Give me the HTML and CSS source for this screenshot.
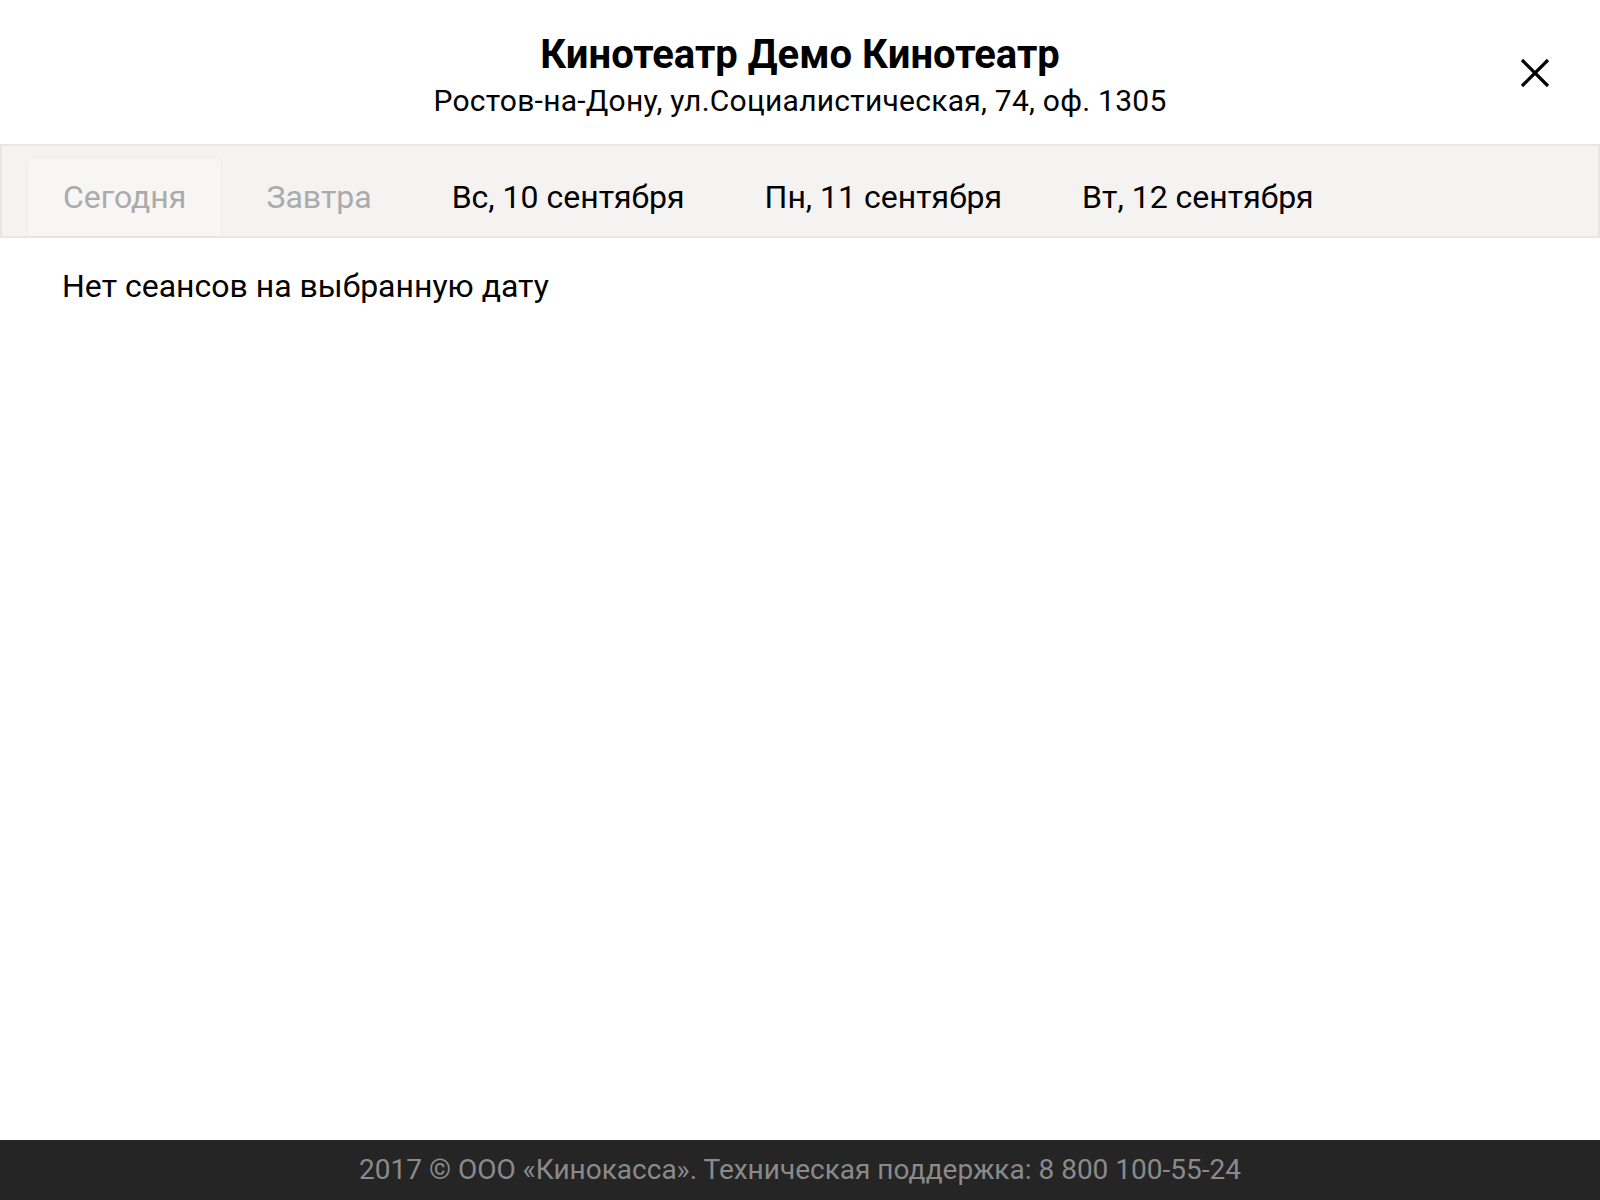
FILE: index.html
```html
<!DOCTYPE html>
<html lang="ru">
<head>
<meta charset="utf-8">
<title>Кинотеатр Демо Кинотеатр</title>
<link rel="stylesheet" href="styles.css">
</head>
<body>
<div class="page">
  <header class="header">
    <h1 class="title">Кинотеатр Демо Кинотеатр</h1>
    <div class="address">Ростов-на-Дону, ул.Социалистическая, 74, оф. 1305</div>
    <button class="close" aria-label="Закрыть">
      <svg width="30" height="30" viewBox="0 0 30 30"><path d="M2 2 L28 28 M28 2 L2 28" stroke="#000" stroke-width="3.2" fill="none"/></svg>
    </button>
  </header>
  <nav class="tabs">
    <div class="tab tab-active tab-muted">Сегодня</div>
    <div class="tab tab-muted">Завтра</div>
    <div class="tab">Вс, 10 сентября</div>
    <div class="tab">Пн, 11 сентября</div>
    <div class="tab">Вт, 12 сентября</div>
  </nav>
  <main class="content">
    <p class="empty">Нет сеансов на выбранную дату</p>
  </main>
  <footer class="footer">2017 © ООО «Кинокасса». Техническая поддержка: 8 800 100-55-24</footer>
</div>
</body>
</html>
```

FILE: styles.css
```css
* { box-sizing: border-box; }
html, body { margin: 0; padding: 0; }
body {
  font-family: Roboto, "Liberation Sans", sans-serif;
  color: #000;
  background: #fff;
}
.page {
  min-height: 100vh;
  display: flex;
  flex-direction: column;
}
.header {
  position: relative;
  height: 144px;
  padding-top: 32px;
  text-align: center;
}
.title {
  margin: 0;
  font-size: 40px;
  font-weight: 700;
  line-height: 46px;
}
.address {
  font-size: 30px;
  line-height: 46px;
  letter-spacing: 0.25px;
}
.close {
  position: absolute;
  top: 58px;
  left: 1520px;
  width: 30px;
  height: 30px;
  padding: 0;
  border: 0;
  background: none;
}
.close svg { display: block; }
.tabs {
  display: flex;
  gap: 8px;
  height: 94px;
  padding: 11px 0 0 25px;
  background: #f4f3f2;
  border: 2px solid #e6e6e6;
}
.tab {
  padding: 0 35px;
  font-size: 32px;
  line-height: 79px;
  height: 79px;
  color: #000;
  border: 1px solid transparent;
  border-bottom: 0;
}
.tab-muted { color: #ababab; }
.tab-active {
  background: #f7f6f5;
  border-color: #efeeed;
  border-radius: 6px 6px 0 0;
}
.content {
  flex: 1;
  padding: 29px 62px 0;
}
.empty {
  margin: 0;
  font-size: 32px;
  line-height: 38px;
}
.footer {
  height: 60px;
  background: #252525;
  color: #8a8a8a;
  font-size: 28px;
  line-height: 60px;
  text-align: center;
}
```
